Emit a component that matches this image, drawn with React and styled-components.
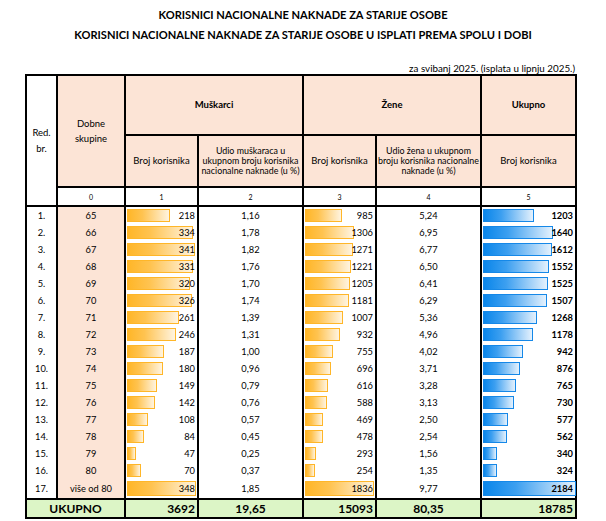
import React from "react";
import styled, { createGlobalStyle } from "styled-components";

const Global = createGlobalStyle`
  html, body { margin: 0; padding: 0; background: #fff; }
  body { font-family: Lato, "Open Sans", sans-serif; color: #000; }
`;

const rows = [
  [1, "65", 218, "1,16", 985, "5,24", 1203],
  [2, "66", 334, "1,78", 1306, "6,95", 1640],
  [3, "67", 341, "1,82", 1271, "6,77", 1612],
  [4, "68", 331, "1,76", 1221, "6,50", 1552],
  [5, "69", 320, "1,70", 1205, "6,41", 1525],
  [6, "70", 326, "1,74", 1181, "6,29", 1507],
  [7, "71", 261, "1,39", 1007, "5,36", 1268],
  [8, "72", 246, "1,31", 932, "4,96", 1178],
  [9, "73", 187, "1,00", 755, "4,02", 942],
  [10, "74", 180, "0,96", 696, "3,71", 876],
  [11, "75", 149, "0,79", 616, "3,28", 765],
  [12, "76", 142, "0,76", 588, "3,13", 730],
  [13, "77", 108, "0,57", 469, "2,50", 577],
  [14, "78", 84, "0,45", 478, "2,54", 562],
  [15, "79", 47, "0,25", 293, "1,56", 340],
  [16, "80", 70, "0,37", 254, "1,35", 324],
  [17, "više od 80", 348, "1,85", 1836, "9,77", 2184],
];

const maxMen = 348;
const maxWomen = 1836;
const maxTotal = 2184;

const PEACH = "#FCE4D6";
const GREEN = "#DCF5C6";

const Page = styled.div`
  width: 606px;
  padding-top: 5px;
`;

const Title = styled.h1`
  margin: 0;
  text-align: center;
  font-size: 11.1px;
  font-weight: 700;
  line-height: 20px;
`;

const Note = styled.div`
  width: 549px;
  margin: 17px 0 0 26px;
  text-align: right;
  font-size: 9.8px;
  line-height: 12px;
`;

const Table = styled.table`
  margin-left: 25px;
  border-collapse: collapse;
  table-layout: fixed;
  width: 552px;
`;

const Th = styled.th`
  border: 2px solid #000;
  background: ${(p) => p.$bg || "#fff"};
  font-weight: ${(p) => (p.$bold ? 700 : 400)};
  font-size: ${(p) => p.$size || 9.5}px;
  line-height: ${(p) => p.$lh || 12}px;
  height: ${(p) => p.$h || 17}px;
  padding: 0;
  text-align: center;
  vertical-align: middle;
`;

const Td = styled.td`
  border-left: 2px solid #000;
  border-right: 2px solid #000;
  background: ${(p) => p.$bg || "#fff"};
  height: ${(p) => p.$h || 17}px;
  padding: 0 ${(p) => (p.$right ? 2 : 0)}px 0 0;
  font-size: 9.3px;
  font-weight: ${(p) => (p.$bold ? 700 : 400)};
  text-align: ${(p) => (p.$right ? "right" : "center")};
  vertical-align: middle;
  position: relative;
  white-space: nowrap;
`;

const TotalCell = styled.td`
  border: 2px solid #000;
  background: ${GREEN};
  height: 17px;
  padding: 0 ${(p) => (p.$right ? 2 : 0)}px 0 0;
  font-size: 12px;
  font-weight: 700;
  line-height: 14px;
  text-align: ${(p) => (p.$right ? "right" : "center")};
  vertical-align: middle;
`;

const Bar = styled.span`
  position: absolute;
  left: 1px;
  top: 2px;
  bottom: 2px;
  box-sizing: border-box;
  border: 1px solid ${(p) => (p.$blue ? "#1588E8" : "#FFB628")};
  background: ${(p) =>
    p.$blue
      ? "linear-gradient(90deg, #0a86ea 0%, #3c9ff0 35%, #e4f1fd 100%)"
      : "linear-gradient(90deg, #FFB628 0%, #ffc350 35%, #fff4e0 100%)"};
`;

const Value = styled.span`
  position: relative;
`;

function BarCell({ value, max, span, blue, bold, h }) {
  return (
    <Td $right $bold={bold} $h={h}>
      <Bar $blue={blue} style={{ width: `${(value / max) * span}px` }} />
      <Value>{value}</Value>
    </Td>
  );
}

export default function App() {
  return (
    <Page>
      <Global />
      <Title>KORISNICI NACIONALNE NAKNADE ZA STARIJE OSOBE</Title>
      <Title>KORISNICI NACIONALNE NAKNADE ZA STARIJE OSOBE U ISPLATI PREMA SPOLU I DOBI</Title>
      <Note>za svibanj 2025. (isplata u lipnju 2025.)</Note>
      <Table>
        <colgroup>
          <col style={{ width: 31 }} />
          <col style={{ width: 68 }} />
          <col style={{ width: 73 }} />
          <col style={{ width: 105 }} />
          <col style={{ width: 73 }} />
          <col style={{ width: 105 }} />
          <col style={{ width: 95 }} />
        </colgroup>
        <thead>
          <tr>
            <Th rowSpan={3} $lh={16}>
              Red.
              <br />
              br.
            </Th>
            <Th rowSpan={2} $bg={PEACH} $lh={15}>
              Dobne
              <br />
              skupine
            </Th>
            <Th colSpan={2} $bg={PEACH} $bold $h={58}>
              Muškarci
            </Th>
            <Th colSpan={2} $bg={PEACH} $bold>
              Žene
            </Th>
            <Th $bg={PEACH} $bold>
              Ukupno
            </Th>
          </tr>
          <tr>
            <Th $bg={PEACH} $h={50}>Broj korisnika</Th>
            <Th $bg={PEACH} $size={8.9} $lh={10}>
              Udio muškaraca u
              <br />
              ukupnom broju korisnika
              <br />
              nacionalne naknade (u %)
            </Th>
            <Th $bg={PEACH}>Broj korisnika</Th>
            <Th $bg={PEACH} $size={8.9} $lh={10}>
              Udio žena u ukupnom
              <br />
              broju korisnika nacionalne
              <br />
              naknade (u %)
            </Th>
            <Th $bg={PEACH}>Broj korisnika</Th>
          </tr>
          <tr>
            <Th $size={7} $h={15}>0</Th>
            <Th $size={7}>1</Th>
            <Th $size={7}>2</Th>
            <Th $size={7}>3</Th>
            <Th $size={7}>4</Th>
            <Th $size={7}>5</Th>
          </tr>
        </thead>
        <tbody>
          {rows.map(([n, age, m, mp, z, zp, t]) => {
            const h = n === 17 ? 19 : 17;
            return (
              <tr key={n}>
                <Td $h={h}>{n}.</Td>
                <Td $bg={PEACH} $h={h}>{age}</Td>
                <BarCell value={m} max={maxMen} span={69} h={h} />
                <Td $h={h}>{mp}</Td>
                <BarCell value={z} max={maxWomen} span={69} h={h} />
                <Td $h={h}>{zp}</Td>
                <BarCell value={t} max={maxTotal} span={93} blue bold h={h} />
              </tr>
            );
          })}
          <tr>
            <TotalCell colSpan={2}>UKUPNO</TotalCell>
            <TotalCell $right>3692</TotalCell>
            <TotalCell>19,65</TotalCell>
            <TotalCell $right>15093</TotalCell>
            <TotalCell>80,35</TotalCell>
            <TotalCell $right>18785</TotalCell>
          </tr>
        </tbody>
      </Table>
    </Page>
  );
}
